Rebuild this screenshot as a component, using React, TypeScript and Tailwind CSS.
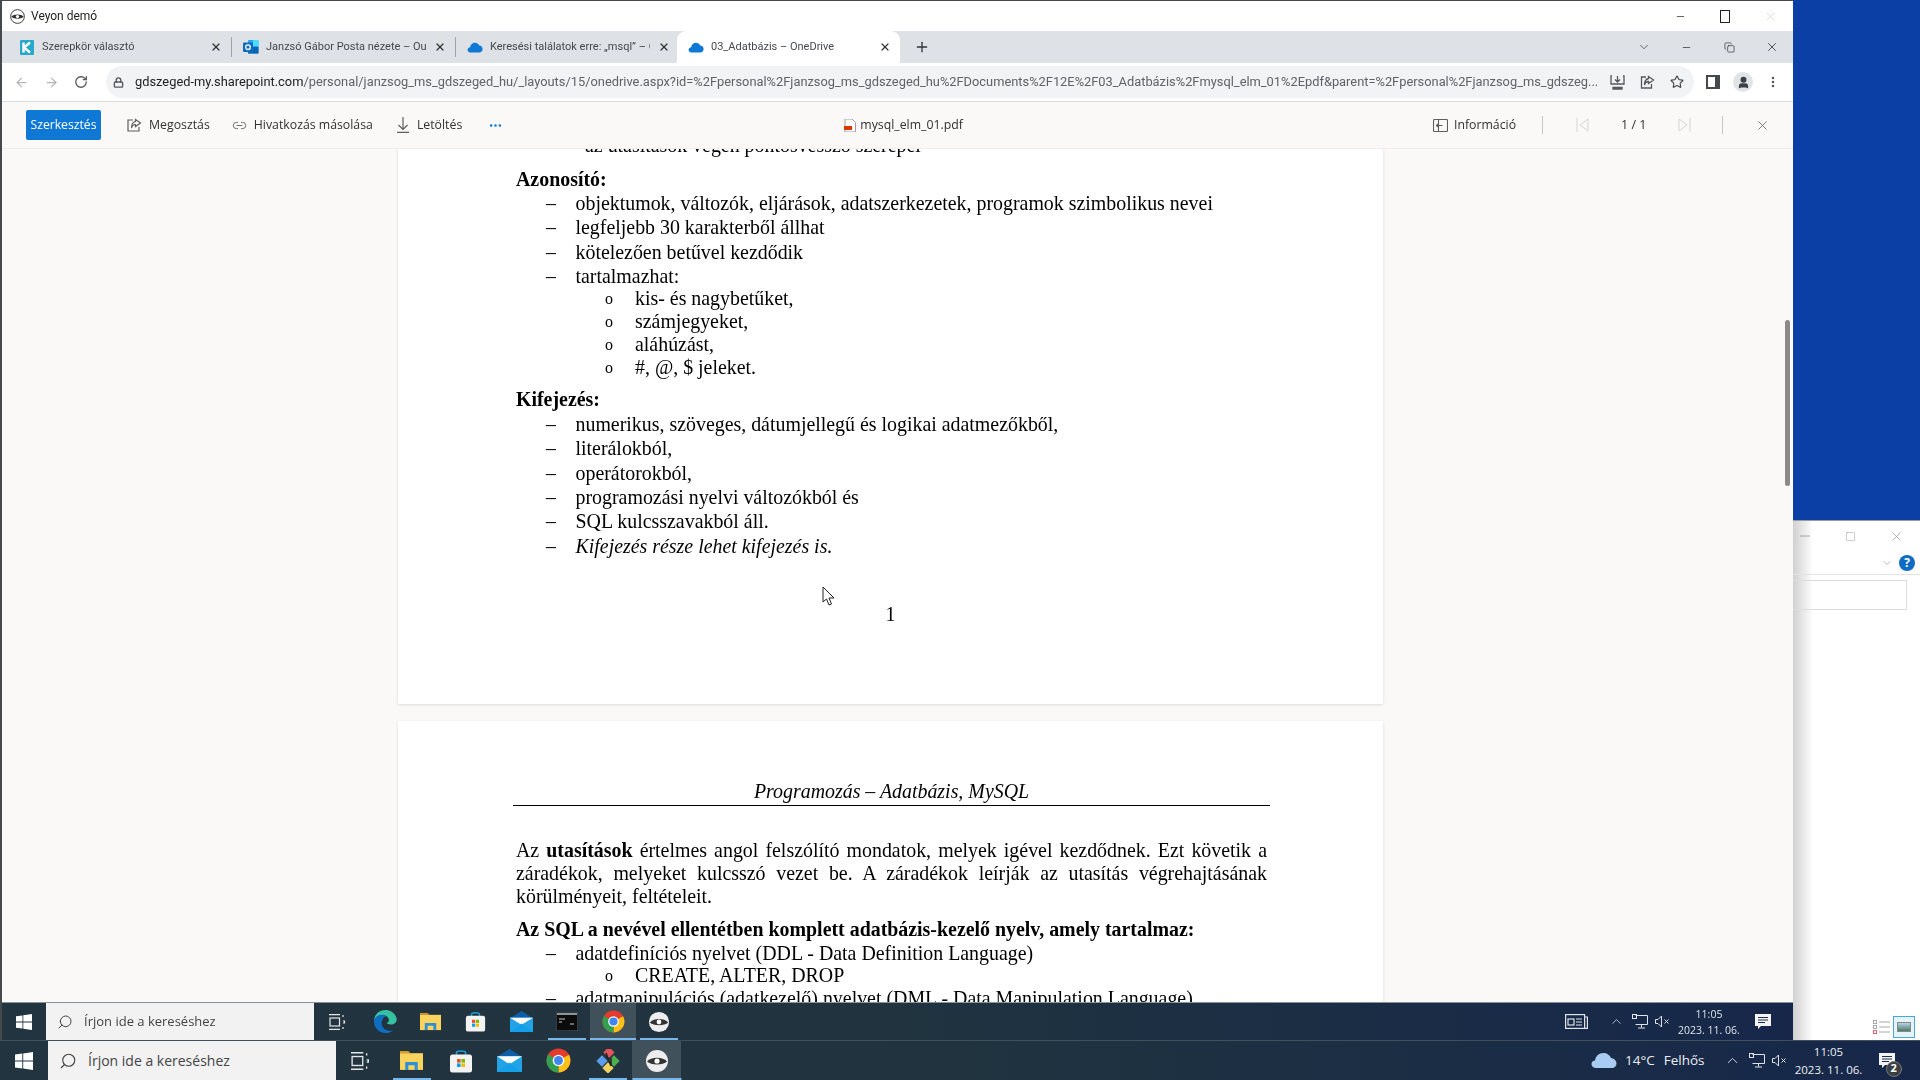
import {ArrowLeft, ArrowRight, RotateCw, Lock, Star, X, Plus, ChevronDown, ChevronUp, Minus, Square, Copy, EllipsisVertical, Ellipsis, Link2, Search, User} from 'lucide-react';
import type {ReactNode} from 'react';

const WinLogo = ({size = 18}: {size?: number}) => (
    <svg width={size} height={size} viewBox="0 0 18 18" fill="#fff">
        <path d="M0 2.6 7.3 1.6V8.5H0ZM8.2 1.5 18 0V8.5H8.2ZM0 9.5H7.3V16.4L0 15.4ZM8.2 9.5H18V18L8.2 16.5Z" />
    </svg>
);

const VeyonEye = ({size = 24, dark = false}: {size?: number; dark?: boolean}) => (
    <svg width={size} height={size} viewBox="0 0 24 24">
        <circle cx="12" cy="12" r="11" fill={dark ? '#fff' : '#eee'} stroke={dark ? '#333' : 'none'} strokeWidth="1.5" />
        <path d="M2 12.5C6 7.5 18 7.5 22 12.5 18 16.5 6 16.5 2 12.5Z" fill="#333" />
        <circle cx="12" cy="12" r="2.6" fill="#fff" />
    </svg>
);

const OneDrive = ({size = 16}: {size?: number}) => (
    <svg width={size} height={size} viewBox="0 0 16 16">
        <path d="M3.5 13.5C1.5 13.5.4 12 .6 10.6.8 9.2 1.9 8.3 3.1 8.2 3.6 5.6 5.5 3.8 8 3.8c1.9 0 3.4 1 4.2 2.8 2 .1 3.4 1.6 3.4 3.4 0 2-1.5 3.5-3.4 3.5Z" fill="#0f78d4" />
    </svg>
);

const Outlook = () => (
    <svg width="16" height="16" viewBox="0 0 16 16">
        <rect x="5" y="1" width="10.5" height="13.5" rx="1" fill="#28a8ea" />
        <rect x="10" y="1" width="5.5" height="6" fill="#50d9ff" />
        <rect x="5" y="8" width="10.5" height="6.5" fill="#0a64b4" />
        <rect x="0" y="3.5" width="10" height="9.5" rx="1" fill="#0f6cbd" />
        <circle cx="5" cy="8.2" r="2.3" fill="none" stroke="#fff" strokeWidth="1.3" />
    </svg>
);

const Kreta = () => (
    <svg width="14" height="15" viewBox="0 0 14 15">
        <rect width="14" height="15" rx="1" fill="#27a9c9" />
        <path d="M3.5 2.5V12.5M4 7.5 10 2.5M4 7.5 10 12.5" stroke="#fff" strokeWidth="2.4" fill="none" />
    </svg>
);

const Chrome = ({size = 24}: {size?: number}) => (
    <svg width={size} height={size} viewBox="0 0 24 24">
        <circle cx="12" cy="12" r="11.5" fill="#e33b2e" />
        <path d="M12 12 22 6.5A11.5 11.5 0 0 1 12 23.5Z" fill="#fbc116" />
        <path d="M12 12 12 23.5A11.5 11.5 0 0 1 2 6.3Z" fill="#2fa14f" />
        <circle cx="12" cy="12" r="5.6" fill="#fff" />
        <circle cx="12" cy="12" r="4.3" fill="#3f86f0" />
    </svg>
);

const Edge = () => (
    <svg width="23" height="23" viewBox="0 0 24 24">
        <path d="M12 0C5 0 .3 5 0 11 2 6 7 4.500 11 5.500 16 7 17 12 13.500 13.500 13 14 18 17 22 13.500 24 12 24 9 23 7 21 2.500 16.500 0 12 0Z" fill="#35c2a1" />
        <path d="M0 11C-.5 18 5 24 12 24 15 24 18 23 20 21 15 23 8 20 8 14 8 10 10 7 13 6.500 8 3 1 6 0 11Z" fill="#0f6ec2" />
    </svg>
);

const Folder = ({size = 22}: {size?: number}) => (
    <svg width={size} height={size} viewBox="0 0 22 20">
        <path d="M0 1H8L10 3H0Z" fill="#d99d27" />
        <rect y="3" width="22" height="16" fill="#fcd35c" />
        <path d="M5 19V11.500H17V19H14V14.500H8V19Z" fill="#2f8fd6" />
    </svg>
);

const StoreBag = ({size = 22}: {size?: number}) => (
    <svg width={size} height={size} viewBox="0 0 22 24">
        <path d="M6.500 6V3.500C6.500 1.500 15.500 1.500 15.500 3.500V6" stroke="#1b9fd8" strokeWidth="1.6" fill="none" />
        <rect x="0" y="5.500" width="22" height="18" rx="2.500" fill="#f3f3f3" />
        <rect x="7" y="10" width="3.600" height="3.600" fill="#f25022" />
        <rect x="11.400" y="10" width="3.600" height="3.600" fill="#7fba00" />
        <rect x="7" y="14.400" width="3.600" height="3.600" fill="#00a4ef" />
        <rect x="11.400" y="14.400" width="3.600" height="3.600" fill="#ffb900" />
    </svg>
);

const Mail = ({size = 23}: {size?: number}) => (
    <svg width={size} height={size} viewBox="0 0 24 24">
        <path d="M12 1 24 8.500H0Z" fill="#0f5fa8" />
        <rect y="8" width="24" height="15" fill="#23a3e6" />
        <path d="M0 8H24L12 15.500Z" fill="#fff" />
        <path d="M0 23 12 14 24 23Z" fill="#14a0e8" />
    </svg>
);

const Terminal = () => (
    <svg width="22" height="19" viewBox="0 0 22 19">
        <rect width="22" height="19" fill="#0c0c0c" stroke="#5b6670" />
        <rect x="1" y="1" width="20" height="2" fill="#8a949c" />
        <path d="M3 7H9M3 10H6M14 12H18" stroke="#c8c8c8" strokeWidth="1" />
    </svg>
);

const GitDiamonds = () => (
    <svg width="24" height="24" viewBox="0 0 24 24">
        <rect x="11" y="1.500" width="8" height="8" transform="rotate(45 15 5.500) translate(-3 0)" fill="#e0565b" />
        <rect x="2" y="8" width="8" height="8" transform="rotate(45 6 12)" fill="#5b9de8" />
        <rect x="8" y="15" width="8" height="8" transform="rotate(45 12 19)" fill="#f2d160" />
        <rect x="14" y="8" width="8" height="8" transform="rotate(45 18 12)" fill="#4caf50" />
        <path d="M10 4 15 17M15 9V17" stroke="#222" strokeWidth="1.500" />
    </svg>
);

const TaskView = ({size = 16}: {size?: number}) => (
    <svg width={size + 1} height={size} viewBox="0 0 17 16" fill="none" stroke="#e6e6e6" strokeWidth="1.200">
        <path d="M0 .6H11M0 15.400H11" />
        <rect x="1" y="4" width="9.500" height="8" />
        <path d="M14 1V3M14 7H15.500V9H14M14 13V15" />
    </svg>
);

const NetIcon = () => (
    <svg width="16" height="15" viewBox="0 0 16 15" fill="none" stroke="#dfe3e7" strokeWidth="1">
        <path d="M3.500 1.500H15.500V10.500H3.500M9.500 10.500V13.500M6 14H13" />
        <rect x=".5" y=".5" width="4" height="4" />
    </svg>
);

const SpeakerMute = () => (
    <svg width="15" height="13" viewBox="0 0 15 13" fill="none" stroke="#dfe3e7" strokeWidth="1">
        <path d="M.5 4.500H3L6.500 1V12L3 8.500H.5ZM9.500 4.500 13.500 8.500M13.500 4.500 9.500 8.500" />
    </svg>
);

const SaveToTray = () => (
    <svg width="15" height="15" viewBox="0 0 15 15" fill="none" stroke="#55585c" strokeWidth="1.300">
        <path d="M2 1H1V9H14V1H13M7.500 1V6.500M5 4.500 7.500 7 10 4.500" />
        <path d="M3 12.500H12V14H3Z" fill="#55585c" />
    </svg>
);

const NotifIcon = ({badge}: {badge?: boolean}) => (
    <div className="relative w-[16px] h-[16px]">
        <svg width="16" height="16" viewBox="0 0 16 16">
            <path d="M0 0H16V12H6L3 15V12H0Z" fill="#f4f4f4" />
            <path d="M3 3.500H13M3 6H13M3 8.500H10" stroke="#1a2b4a" strokeWidth="1" />
        </svg>
        {badge && (
            <span className="absolute left-[7px] top-[8px] w-[16px] h-[16px] rounded-full bg-[#3b3f44] border border-[#777] flex items-center justify-center text-[11px] font-bold text-white font-['Open_Sans',sans-serif]">
                2
            </span>
        )}
    </div>
);

type TabInfo = {title: string; icon: ReactNode; active?: boolean};

const tabs: TabInfo[] = [
    {title: 'Szerepkör választó', icon: <Kreta />},
    {title: 'Janzsó Gábor Posta nézete – Outlook', icon: <Outlook />},
    {title: 'Keresési találatok erre: „msql” – OneDrive', icon: <OneDrive />},
    {title: '03_Adatbázis – OneDrive', icon: <OneDrive />, active: true},
];

const BrowserTab = ({tab}: {tab: TabInfo}) => (
    <div className={`relative w-[223px] h-[32px] flex items-center pl-[11px] pr-[9px] font-['Roboto',sans-serif] text-[11px] text-[#45494e] ${tab.active ? 'bg-white rounded-t-[9px] -ml-[2px] text-[#3c3f43]' : ''}`}>
        <div className="w-[16px] flex justify-center shrink-0">{tab.icon}</div>
        <div className="ml-[7px] w-[160px] overflow-hidden whitespace-nowrap">{tab.title}</div>
        <X className="ml-auto text-[#333]" size={12} strokeWidth={2.4} />
    </div>
);

const Dash = ({children, italic}: {children: ReactNode; italic?: boolean}) => (
    <div className={`flex h-[24.3px] leading-[24.3px] whitespace-nowrap ${italic ? 'italic' : ''}`}>
        <span className="ml-[30px] w-[29.500px] not-italic">–</span>
        <span>{children}</span>
    </div>
);

const Circle = ({children}: {children: ReactNode}) => (
    <div className="flex h-[23px] leading-[23px] whitespace-nowrap">
        <span className="ml-[89px] w-[30px] text-[16px]">o</span>
        <span>{children}</span>
    </div>
);

const SlotBar = ({width, active, line, lineWidth, children}: {width: string; active?: boolean; line?: boolean; lineWidth?: string; children: ReactNode}) => (
    <div className={`relative h-full flex items-center justify-center shrink-0 ${width} ${active ? 'bg-[#ffffff26]' : ''}`}>
        {children}
        {line && <div className={`absolute bottom-0 left-1/2 -translate-x-1/2 h-[2px] bg-[#76b9ed] ${lineWidth ?? 'w-[38px]'}`} />}
    </div>
);

export default function App() {
    return (
        <div className="relative w-[1920px] h-[1080px] overflow-hidden bg-[#0b3fa6] flex flex-col font-['Open_Sans',sans-serif]">
            {/* desktop area */}
            <div className="relative h-[1040px] shrink-0">
                {/* window behind the remote screen */}
                <div className="absolute left-[1793px] top-[520px] w-[127px] h-[520px] bg-white border-t border-[#9a9a9a]">
                    <div className="absolute left-0 top-0 w-[20px] h-full bg-gradient-to-r from-[#d0d0d0] to-white" />
                    <div className="relative h-[30px] flex items-center text-[#8a8a8a]">
                        <Minus className="ml-[4px]" size={16} strokeWidth={1} />
                        <Square className="ml-[32px]" size={11} strokeWidth={1} />
                        <X className="ml-[33px]" size={15} strokeWidth={1} />
                    </div>
                    <div className="relative h-[24px] flex items-center justify-end pr-[5px] gap-[6px] border-b border-[#e4e4e4]">
                        <ChevronDown className="text-[#999]" size={12} strokeWidth={1.4} />
                        <span className="w-[16px] h-[16px] rounded-full bg-[#0f6cc4] text-white text-[12px] font-bold flex items-center justify-center">?</span>
                    </div>
                    <div className="relative mt-[5px] mr-[13px] h-[30px] border border-[#dcdcdc] border-l-0" />
                    <div className="absolute right-[5px] bottom-[2px] flex items-center gap-[2px]">
                        <svg width="18" height="14" viewBox="0 0 18 14" fill="none" stroke="#a8a8a8">
                            <path d="M6 2H17M6 7H17M6 12H17" />
                            <rect x=".5" y=".5" width="3" height="3" />
                            <rect x=".5" y="5.500" width="3" height="3" />
                            <rect x=".5" y="10.500" width="3" height="3" stroke="#d66" />
                        </svg>
                        <div className="w-[22px] h-[22px] border border-[#4aa6de] bg-[#e5f3fb] flex items-center justify-center">
                            <div className="w-[14px] h-[10px] bg-gradient-to-b from-[#b7d3e8] to-[#4a7a68] border border-[#888]" />
                        </div>
                    </div>
                </div>

                {/* remote screen */}
                <div className="absolute left-0 top-0 w-[1793px] h-[1040px] flex flex-col bg-white border-l-2 border-t border-[#45494d] text-[#323130] blur-[0.3px]">
                    <div className="h-[30px] shrink-0 flex items-center pl-[8px] bg-white">
                        <VeyonEye size={15} dark />
                        <span className="ml-[6px] font-['Roboto',sans-serif] text-[12px] text-[#222]">Veyon demó</span>
                        <div className="ml-auto flex items-center text-[#222]">
                            <Minus size={11} strokeWidth={1.5} />
                            <div className="ml-[34px] w-[10px] h-[13px] border border-[#222]" />
                            <X className="ml-[34px] mr-[16px] text-[#c4c4c4]" size={13} strokeWidth={1} />
                        </div>
                    </div>

                    <div className="h-[32px] shrink-0 flex items-center pl-[6px] bg-[#dee1e6]">
                        {tabs.map((t, i) => (
                            <div key={t.title} className="flex items-center">
                                <BrowserTab tab={t} />
                                {i < 2 && <div className="w-px h-[20px] bg-[#a0a4a8]" />}
                            </div>
                        ))}
                        <Plus className="ml-[14px] text-[#333]" size={16} strokeWidth={2} />
                        <div className="ml-auto flex items-center text-[#333]">
                            <ChevronDown size={14} strokeWidth={1.2} />
                            <Minus className="ml-[30px]" size={11} strokeWidth={1.6} />
                            <Copy className="ml-[32px]" size={11} strokeWidth={1.5} />
                            <X className="ml-[30px] mr-[14px]" size={14} strokeWidth={1.4} />
                        </div>
                    </div>

                    <div className="h-[39px] shrink-0 flex items-center bg-white border-b border-[#dcdcdc] pl-[12px]">
                        <ArrowLeft className="text-[#b4b7bb]" size={15} strokeWidth={2} />
                        <ArrowRight className="ml-[15px] text-[#b4b7bb]" size={15} strokeWidth={2} />
                        <RotateCw className="ml-[15px] text-[#55585c]" size={14} strokeWidth={2.2} />
                        <div className="ml-[18px] w-[1588px] h-[32px] shrink-0 rounded-full bg-[#f1f3f4] flex items-center pl-[7px]">
                            <Lock className="text-[#55585c]" size={11} strokeWidth={3} />
                            <div className="ml-[11px] w-[1464px] shrink-0 text-[12.850px] whitespace-nowrap overflow-hidden text-[#5f6368] font-['Roboto',sans-serif]">
                                <span className="text-[#202124]">gdszeged-my.sharepoint.com</span>/personal/janzsog_ms_gdszeged_hu/_layouts/15/onedrive.aspx?id=%2Fpersonal%2Fjanzsog_ms_gdszeged_hu%2FDocuments%2F12E%2F03_Adatbázis%2Fmysql_elm_01%2Epdf&amp;parent=%2Fpersonal%2Fjanzsog_ms_gdszeg...
                            </div>
                            <div className="ml-[11px]"><SaveToTray /></div>
                            <svg className="ml-[15px]" width="15" height="14" viewBox="0 0 15 14" fill="none" stroke="#55585c" strokeWidth="1.300">
                                <path d="M6 2H1.500V13H11.500V9M8.500 1.500 13.500 5 8.500 8.500V6.500C6 6.500 5 8 4.500 10 4.500 6.500 6 4 8.500 3.500Z" />
                            </svg>
                            <Star className="ml-[15px] text-[#45484c]" size={14} strokeWidth={2} />
                        </div>
                        <div className="ml-[12px] w-[14px] h-[14px] border-[2.500px] border-r-[5px] border-[#45484c]" />
                        <div className="ml-[13px] w-[20px] h-[20px] rounded-full bg-[#e0e3e8] flex items-center justify-center">
                            <User className="text-[#3c4043]" size={13} strokeWidth={3} fill="#3c4043" />
                        </div>
                        <EllipsisVertical className="ml-[13px] text-[#55585c]" size={14} strokeWidth={2.4} />
                    </div>

                    <div className="h-[47px] shrink-0 flex items-center bg-[#faf9f8] border-b border-[#eeeeee] pl-[24px] text-[12.300px] whitespace-nowrap">
                        <div className="w-[75px] h-[30px] rounded-[2px] bg-[#0f78d4] text-white text-[12.200px] flex items-center justify-center">Szerkesztés</div>
                        <svg className="ml-[26px]" width="15" height="14" viewBox="0 0 15 14" fill="none" stroke="#605e5c" strokeWidth="1.200">
                            <path d="M6 2H1V13H12V9M8.500 1.500 13.500 5 8.500 8.500V6.500C6 6.500 5 8 4.500 10 4.500 6.500 6 4 8.500 3.500Z" />
                        </svg>
                        <span className="ml-[7px]">Megosztás</span>
                        <Link2 className="ml-[22px] text-[#605e5c]" size={15} strokeWidth={1.4} />
                        <span className="ml-[7px]">Hivatkozás másolása</span>
                        <svg className="ml-[24px]" width="12" height="16" viewBox="0 0 12 16" fill="none" stroke="#605e5c" strokeWidth="1.200">
                            <path d="M6 0V12M1.500 8 6 12.500 10.500 8M0 15.400H12" />
                        </svg>
                        <span className="ml-[8px]">Letöltés</span>
                        <Ellipsis className="ml-[26px] text-[#0f78d4]" size={15} strokeWidth={2.2} />
                        <svg className="ml-[341px]" width="12" height="13" viewBox="0 0 12 13">
                            <path d="M1 0H8L11.500 3.500V13H1Z" fill="#fff" stroke="#a19f9d" />
                            <rect x="0" y="7" width="8" height="4" fill="#d83b01" />
                        </svg>
                        <span className="ml-[4px]">mysql_elm_01.pdf</span>
                        <svg className="ml-[470px]" width="15" height="13" viewBox="0 0 15 13" fill="none" stroke="#605e5c" strokeWidth="1.100">
                            <rect x=".5" y=".5" width="14" height="12" rx="1" />
                            <path d="M5.500 1V12M9.500 6.500H3M3.500 6.500 5 5M3.500 6.500 5 8" />
                        </svg>
                        <span className="ml-[6px]">Információ</span>
                        <div className="ml-[26px] w-px h-[18px] bg-[#c8c6c4]" />
                        <svg className="ml-[33px]" width="13" height="14" viewBox="0 0 13 14" fill="none" stroke="#d5d5d5">
                            <path d="M1 0V14M12 1 4 7 12 13Z" />
                        </svg>
                        <span className="ml-[32px] text-[12.500px]">1 / 1</span>
                        <svg className="ml-[32px]" width="13" height="14" viewBox="0 0 13 14" fill="none" stroke="#d5d5d5">
                            <path d="M12 0V14M1 1 9 7 1 13Z" />
                        </svg>
                        <div className="ml-[31px] w-px h-[18px] bg-[#c8c6c4]" />
                        <X className="ml-[32px] text-[#555]" size={15} strokeWidth={1.2} />
                    </div>

                    {/* pdf area */}
                    <div className="relative flex-1 min-h-0 overflow-hidden bg-[#faf9f8]">
                        <div className="ml-[396px] w-[985px] -mt-[16px] flex flex-col gap-[17px] font-['Liberation_Serif',serif] text-[19.900px] text-black">
                            <div className="bg-white pl-[118px] pb-[78px] shadow-[0_1px_3px_#0000001f]">
                                <div className="flex h-[24px] leading-[24px] whitespace-nowrap">
                                    <span className="ml-[30px] w-[39px]">•</span>
                                    <span>az utasítások végén pontosvessző szerepel</span>
                                </div>
                                <div className="mt-[10px] h-[24px] leading-[24px] font-bold">Azonosító:</div>
                                <Dash>objektumok, változók, eljárások, adatszerkezetek, programok szimbolikus nevei</Dash>
                                <Dash>legfeljebb 30 karakterből állhat</Dash>
                                <Dash>kötelezően betűvel kezdődik</Dash>
                                <Dash>tartalmazhat:</Dash>
                                <div className="-mt-[1px]">
                                    <Circle>kis- és nagybetűket,</Circle>
                                    <Circle>számjegyeket,</Circle>
                                    <Circle>aláhúzást,</Circle>
                                    <Circle>#, @, $ jeleket.</Circle>
                                </div>
                                <div className="mt-[8px] mb-[1px] h-[24px] leading-[24px] font-bold">Kifejezés:</div>
                                <Dash>numerikus, szöveges, dátumjellegű és logikai adatmezőkből,</Dash>
                                <Dash>literálokból,</Dash>
                                <Dash>operátorokból,</Dash>
                                <Dash>programozási nyelvi változókból és</Dash>
                                <Dash>SQL kulcsszavakból áll.</Dash>
                                <Dash italic>Kifejezés része lehet kifejezés is.</Dash>
                                <div className="mt-[44px] h-[24px] leading-[24px] text-center pr-[118px]">1</div>
                            </div>

                            <div className="bg-white pl-[118px] pt-[60px] pb-[40px] shadow-[0_1px_3px_#0000001f]">
                                <div className="-ml-[3px] w-[757px] h-[25px] leading-[21px] text-center italic border-b border-black">Programozás – Adatbázis, MySQL</div>
                                <div className="mt-[33.500px] w-[751px] leading-[22.700px]">
                                    <div className="[text-align-last:justify]">Az <b>utasítások</b> értelmes angol felszólító mondatok, melyek igével kezdődnek. Ezt követik a</div>
                                    <div className="[text-align-last:justify]">záradékok, melyeket kulcsszó vezet be. A záradékok leírják az utasítás végrehajtásának</div>
                                    <div>körülményeit, feltételeit.</div>
                                </div>
                                <div className="mt-[9px] h-[24px] leading-[24px] font-bold whitespace-nowrap">Az SQL a nevével ellentétben komplett adatbázis-kezelő nyelv, amely tartalmaz:</div>
                                <Dash>adatdefiníciós nyelvet (DDL - Data Definition Language)</Dash>
                                <div className="-mt-[1px]">
                                    <Circle>CREATE, ALTER, DROP</Circle>
                                </div>
                                <div className="-mt-[1px]">
                                    <Dash>adatmanipulációs (adatkezelő) nyelvet (DML - Data Manipulation Language)</Dash>
                                </div>
                            </div>
                        </div>
                        {/* scrollbar + cursor overlays */}
                        <div className="absolute left-[1783px] top-[171px] w-[5px] h-[166px] rounded-full bg-[#8a8a8a]" />
                        <svg className="absolute left-[820px] top-[437px]" width="13" height="20" viewBox="0 0 13 20">
                            <path d="M1 1V16L4.500 13 7 19 9.500 18 7 12H12Z" fill="#fff" stroke="#222" strokeWidth="1" />
                        </svg>
                    </div>

                    {/* inner taskbar */}
                    <div className="h-[38px] shrink-0 flex items-center bg-gradient-to-r from-[#21343f] via-[#20333f] to-[#16274a] border-t border-[#8a9299] text-[#dfe3e7] whitespace-nowrap">
                        <div className="w-[44px] flex justify-center"><WinLogo size={16} /></div>
                        <div className="w-[268px] h-full bg-[#f2f2f2] flex items-center pl-[11px] text-[13px] text-[#444]">
                            <Search className="-scale-x-100" size={16} strokeWidth={1.5} />
                            <span className="ml-[11px]">Írjon ide a kereséshez</span>
                        </div>
                        <SlotBar width="w-[46px]"><TaskView /></SlotBar>
                        <div className="w-[2px]" />
                        <SlotBar width="w-[46px]"><Edge /></SlotBar>
                        <SlotBar width="w-[45px]"><Folder size={21} /></SlotBar>
                        <SlotBar width="w-[45px]"><StoreBag size={21} /></SlotBar>
                        <SlotBar width="w-[46px]"><Mail size={23} /></SlotBar>
                        <SlotBar width="w-[46px]" line><Terminal /></SlotBar>
                        <SlotBar width="w-[46px]" active line lineWidth="w-[46px]"><Chrome size={23} /></SlotBar>
                        <SlotBar width="w-[46px]" line><VeyonEye size={22} /></SlotBar>
                        <svg className="ml-[883px]" width="23" height="15" viewBox="0 0 23 15" fill="none" stroke="#dfe3e7" strokeWidth="1.200">
                            <rect x=".6" y=".6" width="19" height="13.800" />
                            <rect x="3" y="5" width="6" height="6" />
                            <path d="M11 5H17M11 8H17M11 11H17M20 3H22.400V14.400H20" />
                        </svg>
                        <ChevronUp className="ml-[21px]" size={15} strokeWidth={1.2} />
                        <div className="ml-[8px]"><NetIcon /></div>
                        <div className="ml-[7px]"><SpeakerMute /></div>
                        <div className="ml-[4px] w-[70px] text-center text-[10.500px] leading-[16px]">
                            <div>11:05</div>
                            <div>2023. 11. 06.</div>
                        </div>
                        <div className="ml-[11px]"><NotifIcon /></div>
                    </div>
                </div>
            </div>

            {/* real taskbar */}
            <div className="h-[40px] shrink-0 flex items-center bg-gradient-to-r from-[#21343f] via-[#20333f] to-[#16274a] border-t border-[#40505c] text-[#eceff2] whitespace-nowrap">
                <div className="w-[48px] flex justify-center"><WinLogo size={18} /></div>
                <div className="w-[288px] h-full bg-[#f2f2f2] flex items-center pl-[11px] text-[14px] text-[#444]">
                    <Search className="-scale-x-100" size={18} strokeWidth={1.5} />
                    <span className="ml-[11px]">Írjon ide a kereséshez</span>
                </div>
                <SlotBar width="w-[49px]"><TaskView size={18} /></SlotBar>
                <div className="w-[2px]" />
                <SlotBar width="w-[49px]" line><Folder size={23} /></SlotBar>
                <SlotBar width="w-[49px]"><StoreBag size={24} /></SlotBar>
                <SlotBar width="w-[49px]"><Mail size={25} /></SlotBar>
                <SlotBar width="w-[49px]"><Chrome size={25} /></SlotBar>
                <SlotBar width="w-[49px]" line><GitDiamonds /></SlotBar>
                <SlotBar width="w-[49px]" active line lineWidth="w-[49px]"><VeyonEye size={24} /></SlotBar>
                <svg className="ml-[910px]" width="26" height="17" viewBox="0 0 26 17">
                    <path d="M5 16C2 16 .5 14 .5 12 .5 10 2 8.500 4 8.500 4.500 4 8 1 12.500 1 16 1 19 3 20 6 23.500 6.500 25.500 9 25.500 11.500 25.500 14 23.500 16 21 16Z" fill="#a9cdf2" />
                </svg>
                <span className="ml-[8px] text-[13.500px]">14°C</span>
                <span className="ml-[9px] text-[13.500px]">Felhős</span>
                <ChevronUp className="ml-[19px]" size={17} strokeWidth={1.2} />
                <div className="ml-[8px]"><NetIcon /></div>
                <div className="ml-[7px]"><SpeakerMute /></div>
                <div className="ml-[5px] w-[74px] text-center text-[11.500px] leading-[18px]">
                    <div>11:05</div>
                    <div>2023. 11. 06.</div>
                </div>
                <div className="ml-[13px]"><NotifIcon badge /></div>
            </div>
        </div>
    );
}
